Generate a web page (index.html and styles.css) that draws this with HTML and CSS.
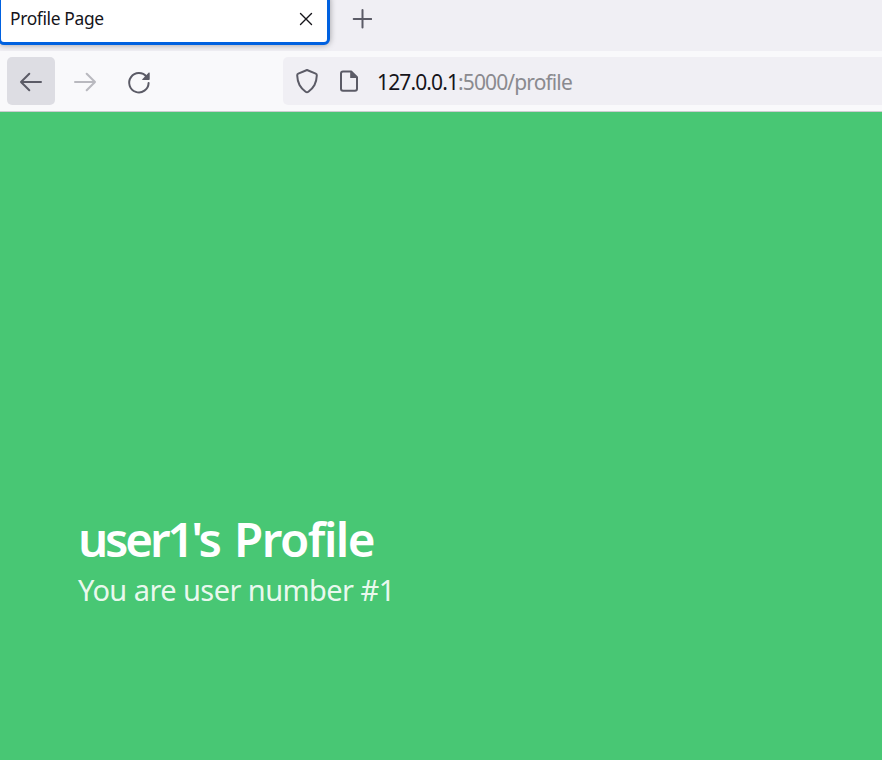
FILE: index.html
```html
<!DOCTYPE html>
<html lang="en">
<head>
<meta charset="utf-8">
<title>Profile Page</title>
<link rel="stylesheet" href="styles.css">
</head>
<body>
<div class="tabs">
  <div class="tab">
    <span class="tab-title">Profile Page</span>
    <svg class="close" width="14" height="14" viewBox="0 0 14 14"><path d="M1.5 1.5l11 11M12.5 1.5l-11 11"/></svg>
  </div>
  <svg class="plus" width="20" height="20" viewBox="0 0 20 20"><path d="M10.5 1v17.6M1.7 10h17.6"/></svg>
</div>
<div class="toolbar">
  <div class="button active"><svg width="48" height="48" viewBox="0 0 48 48"><path d="M34 25H14M22.3 16.8L14 25l8.3 8.2"/></svg></div>
  <div class="button disabled"><svg width="48" height="48" viewBox="0 0 48 48"><path d="M14 25h20M25.7 16.8L34 25l-8.3 8.2"/></svg></div>
  <div class="button"><svg width="48" height="48" viewBox="0 0 48 48"><path d="M33.6 26A9.7 9.7 0 1 1 31.6 19.8"/><path class="solid" d="M34.7 16v6.2q0 .8-.8.8h-6.3q-.9 0-.3-.7l6.5-6.7q.9-.6.9.4z"/></svg></div>
  <div class="address">
    <svg width="24" height="26" viewBox="0 0 24 26"><path d="M12 2L20.7 5.7Q21.9 6.2 21.8 7.5Q21.6 13 19.5 17Q17.6 20.6 13.4 23.7Q12 24.7 10.6 23.7Q6.4 20.6 4.5 17Q2.4 13 2.2 7.5Q2.1 6.2 3.3 5.7Z"/></svg>
    <svg class="doc" width="20" height="24" viewBox="0 0 20 24"><path d="M4 2.5h8.2l5.8 5.8V19.8q0 2-2 2H4q-2 0-2-2V4.5q0-2 2-2z"/><path class="solid" d="M11.2 2.5v6.6h6.6z"/></svg>
    <span class="url"><span class="host">127.0.0.1</span>:5000/profile</span>
  </div>
</div>
<main>
  <h1><span class="name">user1's</span> Profile</h1>
  <p>You are user number #1</p>
</main>
</body>
</html>
```
FILE: styles.css
```css
* { box-sizing: border-box; }
body {
  margin: 0;
  height: 760px;
  overflow: hidden;
  display: flex;
  flex-direction: column;
  font-family: "Noto Sans", "Open Sans", sans-serif;
  background: #48c774;
}
svg {
  display: block;
  flex: none;
  fill: none;
  stroke: #5b5b66;
  stroke-width: 2;
  stroke-linecap: round;
  stroke-linejoin: round;
}
.solid { fill: #5b5b66; stroke: none; }
.tabs {
  flex: none;
  height: 51px;
  display: flex;
  background: #f0eff4;
  overflow: hidden;
}
.tab {
  width: 332px;
  height: 51px;
  margin: -6px 0 0 -2px;
  padding: 6px 14px 0 9px;
  display: flex;
  justify-content: space-between;
  border: 3px solid #0061e0;
  border-radius: 6px;
  background: #fff;
  box-shadow: 0 0 6px rgba(0, 0, 0, .35);
}
.tab-title {
  margin-top: 3px;
  font-size: 17.4px;
  line-height: 24px;
  letter-spacing: -.35px;
  color: #15141a;
  white-space: nowrap;
}
.close { margin-top: 9px; stroke: #15141a; stroke-width: 1.4; }
.plus { margin: 9px 0 0 22px; }
.toolbar {
  flex: none;
  height: 61px;
  display: flex;
  gap: 6px;
  padding: 6px 0 0 7px;
  background: #f9f9fb;
  border-bottom: 1px solid #cccdd0;
}
.button { width: 48px; height: 48px; border-radius: 5px; }
.active { background: #dddde3; }
.disabled { opacity: .4; }
.address {
  flex: 1;
  height: 48px;
  margin-left: 114px;
  padding-left: 12px;
  display: flex;
  align-items: center;
  background: #f0eff4;
  border-radius: 5px 0 0 5px;
}
.doc { margin-left: 20px; }
.url {
  margin: 2px 0 0 18px;
  font-size: 21px;
  line-height: 30px;
  letter-spacing: -.88px;
  color: #8a8a8f;
  white-space: nowrap;
}
.host { color: #15141a; }
main {
  flex: 1;
  display: flex;
  flex-direction: column;
  justify-content: flex-end;
  padding: 0 0 152px 78px;
  color: #fff;
}
h1 {
  margin: 0;
  font-size: 47.5px;
  line-height: 54px;
  font-weight: 600;
  letter-spacing: -1.5px;
  word-spacing: 4.5px;
}
.name { letter-spacing: -3.2px; }
p {
  margin: 6px 0 0;
  font-size: 29px;
  line-height: 36px;
  letter-spacing: -.57px;
  color: rgba(255, 255, 255, .9);
}
```
